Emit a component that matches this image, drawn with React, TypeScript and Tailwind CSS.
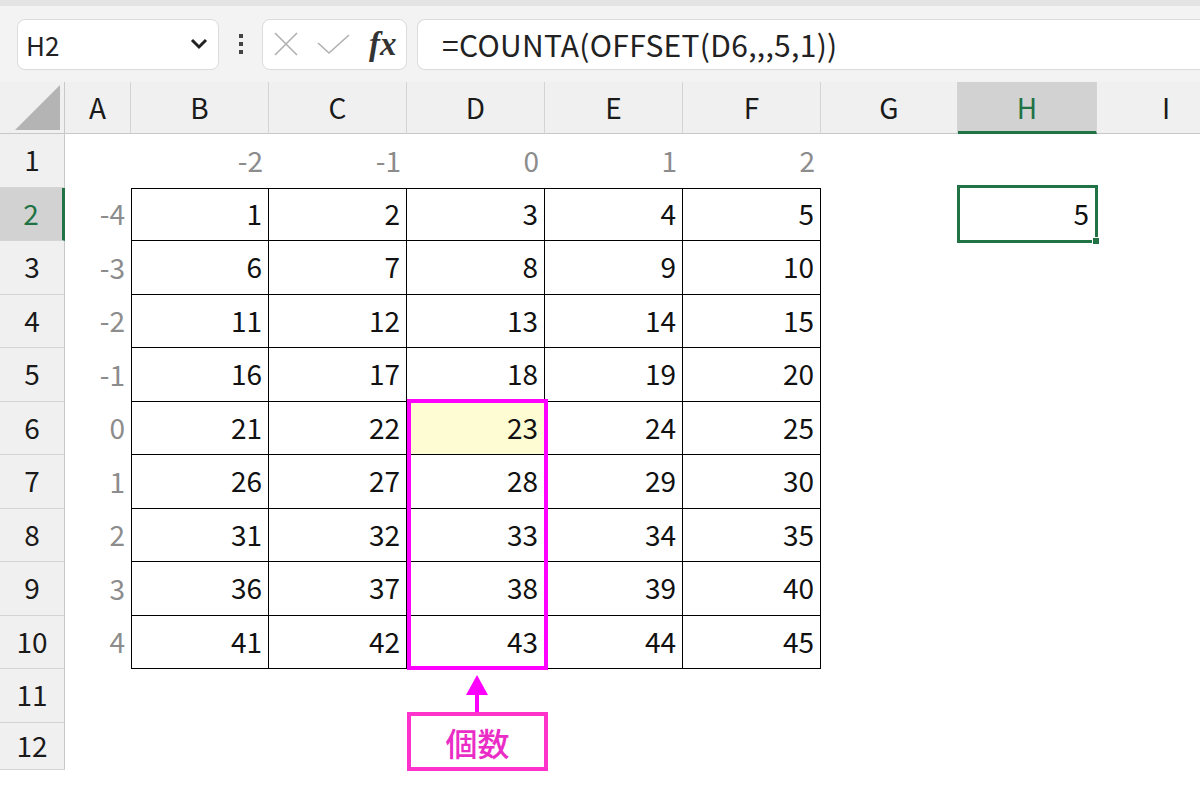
import React from "react";

const cols = ["A", "B", "C", "D", "E", "F", "G", "H", "I"];
const font = { fontFamily: '"Noto Sans CJK JP", "Noto Sans", sans-serif' };

// value grid for B2:F10
const table = Array.from({ length: 9 }, (_, r) => Array.from({ length: 5 }, (_, c) => r * 5 + c + 1));

function FormulaBar() {
  return (
    <div className="flex h-[82px] items-center border-t-[6px] border-[#e4e4e4] bg-[#f3f3f3] pl-[17px]">
      <div className="flex h-[51px] w-[202px] items-center justify-between rounded-[8px] border border-[#dcdcdc] bg-white pl-[8px] pr-[10px]">
        <span className="text-[26px] text-[#222]">H2</span>
        <svg width="18" height="12" viewBox="0 0 18 12">
          <path d="M2 2 L9 9 L16 2" fill="none" stroke="#222" strokeWidth="3" />
        </svg>
      </div>
      <div className="flex w-[43px] flex-col items-center gap-[4px]">
        <span className="h-[4px] w-[4px] bg-[#444]" />
        <span className="h-[4px] w-[4px] bg-[#444]" />
        <span className="h-[4px] w-[4px] bg-[#444]" />
      </div>
      <div className="flex h-[51px] w-[145px] items-center rounded-[8px] border border-[#dcdcdc] bg-white pl-[10px]">
        <svg width="26" height="26" viewBox="0 0 26 26">
          <path d="M2 2 L24 24 M24 2 L2 24" stroke="#b0b0b0" strokeWidth="1.6" />
        </svg>
        <svg className="ml-[18px]" width="33" height="22" viewBox="0 0 33 22">
          <path d="M1 10 L12 20 L32 2" fill="none" stroke="#b0b0b0" strokeWidth="1.6" />
        </svg>
        <span
          className="ml-[19px] text-[33px] font-bold italic leading-none text-[#333]"
          style={{ fontFamily: '"Liberation Serif", serif' }}
        >
          fx
        </span>
      </div>
      <div className="ml-[10px] flex h-[51px] flex-1 items-center rounded-l-[8px] border border-r-0 border-[#dcdcdc] bg-white pl-[24px]">
        <span className="text-[30px] tracking-[0.3px] text-[#222]">=COUNTA(OFFSET(D6,,,5,1))</span>
      </div>
    </div>
  );
}

function Sheet() {
  const rows = Array.from({ length: 12 }, (_, i) => i + 1);
  return (
    <div className="relative grid grid-cols-[65px_66px_138px_138px_138px_138px_138px_137px_139px_139px] grid-rows-[52px_54px_53px_54px_53px_54px_53px_54px_53px_54px_53px_54px_47px] text-[28px]">
      {/* column headers */}
      <div className="relative border-b border-r border-[#c8c8c8] bg-[#f0f0f0]">
        <svg className="absolute bottom-[3px] right-[4px]" width="45" height="45" viewBox="0 0 45 45">
          <path d="M45 0 L45 45 L0 45 Z" fill="#b4b4b4" />
        </svg>
      </div>
      {cols.map((c) => (
        <div
          key={c}
          className={
            c === "H"
              ? "flex items-center justify-center border-b-[3px] border-r border-b-[#217346] border-r-[#d4d4d4] bg-[#d2d2d2] pt-[1px] text-[#217346]"
              : "flex items-center justify-center border-b border-r border-b-[#c8c8c8] border-r-[#d4d4d4] bg-[#f0f0f0] pb-[1px] text-[#1a1a1a]"
          }
        >
          {c}
        </div>
      ))}

      {rows.map((row) => {
        const dataRow = row >= 2 && row <= 10 ? table[row - 2] : null;
        return (
          <React.Fragment key={row}>
            <div
              className={
                row === 2
                  ? "flex items-center justify-center border-b border-r-[3px] border-b-[#d4d4d4] border-r-[#217346] bg-[#d2d2d2] pb-[3px] text-[#217346]"
                  : "flex items-center justify-center border-b border-r border-b-[#d4d4d4] border-r-[#c8c8c8] bg-[#f0f0f0] pb-[3px] text-[#1a1a1a]"
              }
            >
              {row}
            </div>
            {/* column A: row offsets */}
            <div className="flex items-center justify-end pb-[3px] pr-[6px] text-[#8c8c8c]">{dataRow ? row - 6 : ""}</div>
            {/* columns B-F */}
            {[0, 1, 2, 3, 4].map((c) => {
              if (row === 1) {
                return (
                  <div key={c} className="flex items-center justify-end pb-[3px] pr-[6px] text-[#8c8c8c]">
                    {c - 2}
                  </div>
                );
              }
              if (!dataRow) return <div key={c} />;
              const yellow = row === 6 && c === 2;
              return (
                <div
                  key={c}
                  className={`flex items-center justify-end border-b border-r border-black pb-[3px] pr-[6px] text-[#111] ${
                    row === 2 ? "border-t" : ""
                  } ${c === 0 ? "border-l" : ""} ${yellow ? "bg-[#fefcd3]" : ""}`}
                >
                  {dataRow[c]}
                </div>
              );
            })}
            <div />
            {/* column H: result */}
            <div className="flex items-center justify-end pb-[3px] pr-[8px] text-[#111]">{row === 2 ? "5" : ""}</div>
            <div />
          </React.Fragment>
        );
      })}

      {/* active cell H2 */}
      <div className="absolute left-[957px] top-[103px] h-[58px] w-[141px] border-[3px] border-[#217346]">
        <span className="absolute -bottom-[5px] -right-[5px] h-[8px] w-[8px] border border-white bg-[#217346]" />
      </div>

      {/* highlighted range D6:D10 */}
      <div className="absolute left-[407px] top-[317px] h-[271px] w-[141px] border-[4px] border-[#ff00ff]" />

      {/* arrow */}
      <svg className="absolute left-[466px] top-[593px]" width="22" height="38" viewBox="0 0 22 38">
        <path d="M11 0 L22 20 L0 20 Z" fill="#ff00ff" />
        <rect x="9" y="18" width="4" height="20" fill="#ff00ff" />
      </svg>

      {/* label */}
      <div className="absolute left-[407px] top-[630px] flex h-[59px] w-[141px] items-center justify-center border-[4px] border-[#ff33cc] bg-white">
        <span className="text-[32px] font-medium leading-none text-[#ea2dc6]">個数</span>
      </div>
    </div>
  );
}

export default function App() {
  return (
    <div className="h-[785px] w-[1200px] overflow-hidden bg-white" style={font}>
      <FormulaBar />
      <Sheet />
    </div>
  );
}
